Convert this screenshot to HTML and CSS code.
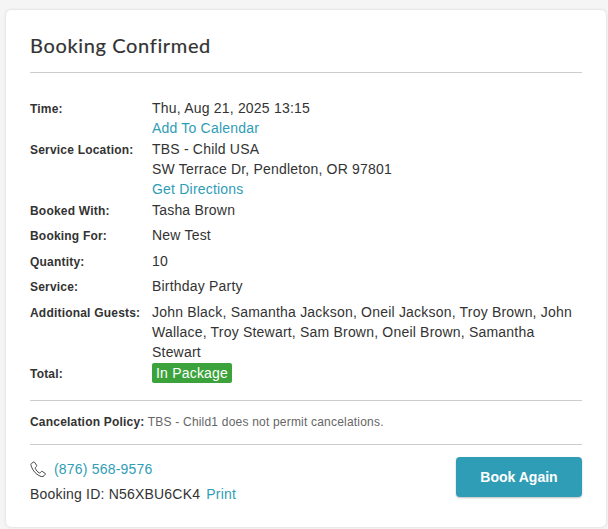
FILE: index.html
```html
<!DOCTYPE html>
<html lang="en">
<head>
  <meta charset="UTF-8">
  <meta name="viewport" content="width=device-width, initial-scale=1.0">
  <title>Booking Confirmed</title>
  <link rel="stylesheet" href="styles.css">
</head>
<body>

  <div class="card">
    <h1 class="card-title">Booking Confirmed</h1>

    <div class="details">
      <div class="row tight">
        <div class="label">Time:</div>
        <div class="value">Thu, Aug 21, 2025 13:15<br><a href="#">Add To Calendar</a></div>
      </div>
      <div class="row tight">
        <div class="label">Service Location:</div>
        <div class="value">TBS - Child USA<br>SW Terrace Dr, Pendleton, OR 97801<br><a href="#">Get Directions</a></div>
      </div>
      <div class="row">
        <div class="label">Booked With:</div>
        <div class="value">Tasha Brown</div>
      </div>
      <div class="row">
        <div class="label">Booking For:</div>
        <div class="value">New Test</div>
      </div>
      <div class="row">
        <div class="label">Quantity:</div>
        <div class="value">10</div>
      </div>
      <div class="row">
        <div class="label">Service:</div>
        <div class="value">Birthday Party</div>
      </div>
      <div class="row tight">
        <div class="label">Additional Guests:</div>
        <div class="value">John Black, Samantha Jackson, Oneil Jackson, Troy Brown, John Wallace, Troy Stewart, Sam Brown, Oneil Brown, Samantha Stewart</div>
      </div>
      <div class="row">
        <div class="label">Total:</div>
        <div class="value"><span class="badge">In Package</span></div>
      </div>
    </div>

    <p class="policy"><strong>Cancelation Policy:</strong> TBS - Child1 does not permit cancelations.</p>

    <div class="footer">
      <div class="contact">
        <div class="phone">
          <svg class="phone-icon" viewBox="0 0 16 16" width="16" height="16" fill="none" stroke="#444" stroke-width="1" stroke-linejoin="round">
            <path d="M3.6 1 1.6 2.3C.9 2.8.8 3.6 1 4.4 1.8 7 3.2 9.500 5 11.500 6.800 13.400 9.200 15 11.800 15.600 12.700 15.800 13.500 15.500 14 14.800L15.300 13.200C15.500 12.900 15.400 12.500 15.100 12.300L12.200 10.400C11.900 10.200 11.500 10.300 11.300 10.500L10.300 11.700C10 12 9.600 12.100 9.200 11.900 7.500 10.900 6.100 9.300 5.300 7.400 5.100 7 5.200 6.600 5.500 6.300L6.500 5.400C6.800 5.200 6.800 4.800 6.700 4.500L4.600 1.300C4.400.9 3.900.8 3.600 1Z"/>
          </svg>
          <a href="#">(876) 568-9576</a>
        </div>
        <div class="booking-id">Booking ID: N56XBU6CK4 <a class="print-link" href="#">Print</a></div>
      </div>
      <button class="book-again">Book Again</button>
    </div>
  </div>

</body>
</html>
```

FILE: styles.css
```css
* {
  margin: 0;
  padding: 0;
  box-sizing: border-box;
}

body {
  font-family: 'Liberation Sans', Arial, sans-serif;
  font-size: 14px;
  line-height: 20px;
  letter-spacing: 0.2px;
  color: #333;
  background-color: #f5f5f5;
  padding: 10px 2px 2px 6px;
}

a {
  color: #2f9db6;
  text-decoration: none;
}

.card {
  background-color: #fff;
  border-radius: 5px;
  box-shadow: 0 0 3px rgba(0, 0, 0, 0.15);
  padding: 0 24px;
  height: 517px;
}

.card-title {
  font-family: 'Lato', sans-serif;
  font-size: 20px;
  font-weight: 400;
  line-height: 26px;
  padding: 22px 0 14px;
  border-bottom: 1px solid #ccc;
  letter-spacing: 0.65px;
  -webkit-text-stroke: 0.2px #333;
}

.details {
  padding-top: 25px;
  padding-bottom: 17px;
  border-bottom: 1px solid #ccc;
}

.row {
  display: flex;
  margin-bottom: 5.4px;
}

.row.tight {
  margin-bottom: 1px;
}

.row:last-child {
  margin-bottom: 0;
}

.label {
  flex: 0 0 122px;
  font-size: 12px;
  font-weight: 700;
  padding-top: 1px;
  margin-bottom: -1px;
}

.value {
  flex: 1;
}

.badge {
  display: inline-block;
  background-color: #3ca33c;
  color: #fff;
  border-radius: 2px;
  padding: 0 4px;
}

.policy {
  font-size: 12px;
  color: #666;
  padding: 11px 0 12px;
  border-bottom: 1px solid #ccc;
}

.policy strong {
  color: #333;
}

.footer {
  display: flex;
  justify-content: space-between;
  align-items: flex-start;
  padding-top: 12px;
}

.contact {
  padding-top: 2px;
}

.phone {
  display: flex;
  align-items: center;
  gap: 8px;
  margin-bottom: 5px;
}

.print-link {
  margin-left: 2px;
}

.book-again {
  width: 126px;
  height: 40px;
  background-color: #2f9db6;
  color: #fff;
  border: none;
  border-radius: 4px;
  font-family: inherit;
  font-size: 14px;
  font-weight: 700;
  letter-spacing: 0;
  box-shadow: 0 1px 2px rgba(0, 0, 0, 0.25);
  cursor: pointer;
}
```
